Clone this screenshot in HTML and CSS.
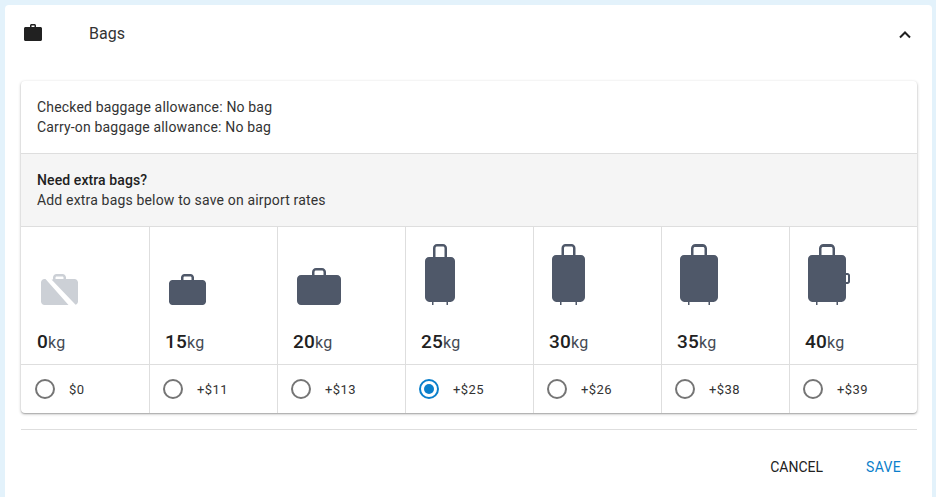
FILE: index.html
```html
<!DOCTYPE html>
<html lang="en">
<head>
<meta charset="utf-8">
<title>Bags</title>
<link rel="stylesheet" href="styles.css">
</head>
<body>
<section class="panel">
  <header class="panel-head">
    <svg class="head-icon" viewBox="0 0 18 17"><path d="M6 3V1.600C6 .7 6.700 0 7.600 0h2.800C11.300 0 12 .7 12 1.600V3h4.500C17.300 3 18 3.700 18 4.500V15.500C18 16.300 17.300 17 16.500 17H1.500C.7 17 0 16.300 0 15.500V4.500C0 3.700.7 3 1.500 3ZM7.500 1.500V3h3V1.500Z" fill="#212121" fill-rule="evenodd"/></svg>
    <h2 class="panel-title">Bags</h2>
    <svg class="chevron" viewBox="0 0 12 8"><path d="M1 6.500 6 1.500 11 6.500" fill="none" stroke="#212121" stroke-width="2"/></svg>
  </header>
  <div class="inner">
    <div class="allowance">
      <p>Checked baggage allowance: No bag</p>
      <p>Carry-on baggage allowance: No bag</p>
    </div>
    <div class="extra">
      <p class="extra-title">Need extra bags?</p>
      <p>Add extra bags below to save on airport rates</p>
    </div>
    <div class="options">
      <div class="option">
        <div class="bag-box first">
          <svg class="bag" width="37" height="31" viewBox="0 0 37 31"><path fill="#ccd0d6" fill-rule="evenodd" d="M12 5.500V3.500C12 1.600 13.600 0 15.500 0h6C23.400 0 25 1.600 25 3.500V5H33.500C35.400 5 37 6.600 37 8.500v19c0 1.500-1 2.800-2.400 3.300L10.500 5.500ZM14.500 5h8V3.500c0-.5-.5-1-1-1h-6c-.5 0-1 .5-1 1ZM0 8.500C0 6.600 1.600 5 3.500 5H4.500L27.500 31H3.500C1.600 31 0 29.400 0 27.500Z"/></svg>
        </div>
        <div class="weight"><b>0</b>kg</div>
        <div class="price"><span class="radio"></span><span class="amount">$0</span></div>
      </div>
      <div class="option">
        <div class="bag-box">
          <svg class="bag" width="37" height="31" viewBox="0 0 37 31"><path fill="#4f5869" fill-rule="evenodd" d="M12 6V3.500C12 1.600 13.600 0 15.500 0h6C23.400 0 25 1.600 25 3.500V6h8.500C35.400 6 37 7.600 37 9.500v18c0 1.900-1.600 3.500-3.500 3.500H3.500C1.600 31 0 29.400 0 27.500v-18C0 7.600 1.600 6 3.500 6ZM14.500 6h8V3.500c0-.5-.5-1-1-1h-6c-.5 0-1 .5-1 1Z"/></svg>
        </div>
        <div class="weight"><b>15</b>kg</div>
        <div class="price"><span class="radio"></span><span class="amount">+$11</span></div>
      </div>
      <div class="option">
        <div class="bag-box">
          <svg class="bag" width="44" height="37" viewBox="0 0 44 37"><path fill="#4f5869" fill-rule="evenodd" d="M15 7V4C15 1.800 16.800 0 19 0h6c2.200 0 4 1.800 4 4V7h11c2.200 0 4 1.800 4 4V33c0 2.200-1.800 4-4 4H4C1.800 37 0 35.200 0 33V11C0 8.800 1.800 7 4 7ZM17.500 7h9V4c0-.8-.7-1.500-1.500-1.500H19c-.8 0-1.500.7-1.500 1.500Z"/></svg>
        </div>
        <div class="weight"><b>20</b>kg</div>
        <div class="price"><span class="radio"></span><span class="amount">+$13</span></div>
      </div>
      <div class="option">
        <div class="bag-box">
          <svg class="bag" width="30" height="61" viewBox="0 0 30 61"><path fill="#4f5869" fill-rule="evenodd" d="M8 13V4C8 1.800 9.800 0 12 0h6c2.200 0 4 1.800 4 4V13h4c2.200 0 4 1.800 4 4V53c0 2.800-2.200 5-5 5H23v3H21.500V58H8.500v3H7V58H5c-2.800 0-5-2.200-5-5V17c0-2.200 1.800-4 4-4ZM10.500 13h9V4c0-.8-.7-1.500-1.500-1.500H12c-.8 0-1.500.7-1.500 1.500Z"/></svg>
        </div>
        <div class="weight"><b>25</b>kg</div>
        <div class="price"><span class="radio on"></span><span class="amount">+$25</span></div>
      </div>
      <div class="option">
        <div class="bag-box tall">
          <svg class="bag" width="33" height="61" viewBox="0 0 33 61"><path fill="#4f5869" fill-rule="evenodd" d="M9.500 11V4C9.500 1.800 11.300 0 13.500 0h6c2.200 0 4 1.800 4 4V11H29c2.200 0 4 1.800 4 4V53c0 2.800-2.200 5-5 5H25v3H23.500V58H9.500v3H8V58H5c-2.800 0-5-2.200-5-5V15c0-2.200 1.800-4 4-4ZM12 11h9V4c0-.8-.7-1.500-1.500-1.500h-6C12.700 2.500 12 3.200 12 4Z"/></svg>
        </div>
        <div class="weight"><b>30</b>kg</div>
        <div class="price"><span class="radio"></span><span class="amount">+$26</span></div>
      </div>
      <div class="option">
        <div class="bag-box tall">
          <svg class="bag" width="38" height="61" viewBox="0 0 38 61"><path fill="#4f5869" fill-rule="evenodd" d="M11 11V4.500C11 2 13 0 15.500 0h7C25 0 27 2 27 4.500V11h7c2.200 0 4 1.800 4 4V53c0 2.800-2.200 5-5 5H30v3H28.500V58H9.500v3H8V58H5c-2.800 0-5-2.200-5-5V15c0-2.200 1.800-4 4-4ZM13.500 11h11V4.500c0-.8-.7-1.500-1.500-1.500H15c-.8 0-1.500.7-1.500 1.500Z"/></svg>
        </div>
        <div class="weight"><b>35</b>kg</div>
        <div class="price"><span class="radio"></span><span class="amount">+$38</span></div>
      </div>
      <div class="option">
        <div class="bag-box tall">
          <svg class="bag" width="42" height="61" viewBox="0 0 42 61"><path fill="#4f5869" fill-rule="evenodd" d="M11 11V4.500C11 2 13 0 15.500 0h7C25 0 27 2 27 4.500V11h7c2.200 0 4 1.800 4 4V29h1.500c1.400 0 2.500 1.100 2.500 2.500v6c0 1.400-1.100 2.500-2.500 2.500H38V53c0 2.800-2.200 5-5 5H30v3H28.500V58H9.500v3H8V58H5c-2.800 0-5-2.200-5-5V15c0-2.200 1.800-4 4-4ZM13.500 11h11V4.500c0-.8-.7-1.500-1.500-1.500H15c-.8 0-1.500.7-1.500 1.500ZM38 31v7h1.500c.2 0 .5-.3.500-.5v-6c0-.2-.3-.5-.5-.5Z"/></svg>
        </div>
        <div class="weight"><b>40</b>kg</div>
        <div class="price"><span class="radio"></span><span class="amount">+$39</span></div>
      </div>
    </div>
  </div>
  <footer class="actions">
    <button class="btn" type="button">CANCEL</button>
    <button class="btn primary" type="button">SAVE</button>
  </footer>
</section>
</body>
</html>
```
FILE: styles.css
```css
* { box-sizing: border-box; }
html, body { height: 100%; }
body {
  margin: 0;
  padding: 5px 4px 0 5px;
  background: #e3f2fb;
  font-family: Roboto, "Liberation Sans", sans-serif;
  color: #212121;
  overflow: hidden;
}
p { margin: 0; }
.panel {
  height: 492px;
  background: #fff;
  border-radius: 4px 4px 0 0;
  padding: 0 15px 0 16px;
}
.panel-head {
  height: 76px;
  display: flex;
  align-items: flex-start;
  padding: 19px 0 0 3px;
}
.head-icon { width: 18px; height: 17px; flex: none; }
.panel-title {
  margin: 0 0 0 47px;
  font-size: 16px;
  line-height: 20px;
  font-weight: 400;
  flex: 1;
  color: #333;
}
.chevron { width: 12px; height: 8px; margin: 7px 6px 0 0; flex: none; }
.inner {
  background: #fff;
  border-radius: 4px;
  box-shadow: 0 1px 3px rgba(0,0,0,.3), 0 1px 1px rgba(0,0,0,.14);
  font-size: 14px;
  line-height: 20px;
  letter-spacing: .17px;
  color: #333;
}
.allowance {
  height: 73px;
  padding: 16px 16px 0;
  border-bottom: 1px solid #dedede;
}
.extra {
  height: 73px;
  padding: 16px 16px 0;
  background: #f5f5f5;
  border-bottom: 1px solid #dedede;
}
.extra-title { font-weight: 500; color: #212121; letter-spacing: .1px; }
.options { display: grid; grid-template-columns: repeat(7, 128px); }
.option { border-left: 1px solid #dedede; }
.option:first-child { border-left: 0; }
.bag-box {
  height: 78px;
  padding: 0 0 0 19px;
  display: flex;
  align-items: flex-end;
}
.bag-box.first { padding-left: 20px; }
.bag-box.tall { padding-left: 18px; }
.bag { display: block; }
.weight {
  height: 60px;
  padding: 23px 0 0 15px;
  font-size: 16px;
  line-height: 28px;
  letter-spacing: .2px;
  border-bottom: 1px solid #dedede;
  color: #444a54;
}
.option:first-child .weight { padding-left: 16px; }
.weight b { font-size: 19px; font-weight: 500; color: #212121; }
.price {
  height: 48px;
  display: flex;
  align-items: center;
  gap: 14px;
  padding-left: 13px;
  font-size: 13px;
  letter-spacing: .45px;
}
.option:first-child .price { padding-left: 14px; }
.amount { padding-top: 1px; }
.radio {
  width: 20px;
  height: 20px;
  border-radius: 50%;
  border: 2px solid #757575;
  flex: none;
  position: relative;
}
.radio.on { border-color: #0a7fcb; }
.radio.on::after {
  content: "";
  position: absolute;
  inset: 3px;
  border-radius: 50%;
  background: #0a7fcb;
}
.actions {
  margin-top: 16px;
  border-top: 1px solid #dedede;
  display: flex;
  justify-content: flex-end;
  gap: 43px;
  padding: 27px 16px 0 0;
}
.btn {
  border: 0;
  background: none;
  padding: 0;
  font: 400 14px/20px Roboto, "Liberation Sans", sans-serif;
  letter-spacing: 0;
  color: #212121;
}
.btn.primary { color: #0a7fcb; letter-spacing: .3px; }
```
